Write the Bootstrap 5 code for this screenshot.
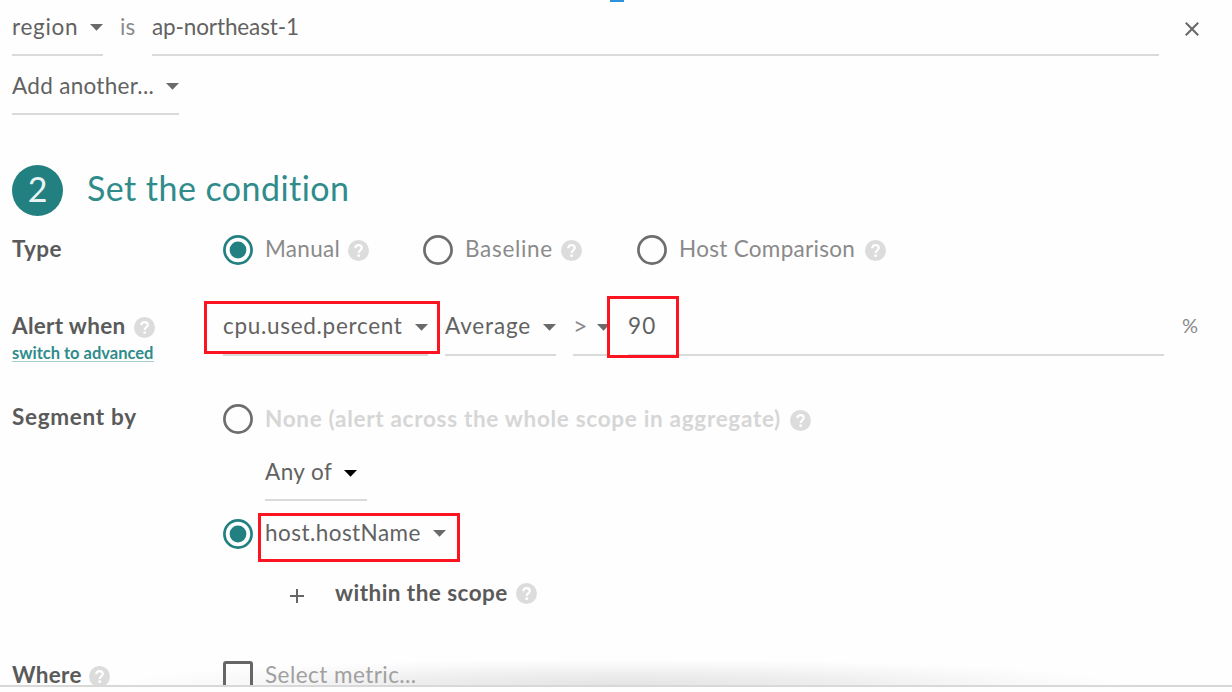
<!DOCTYPE html>
<html lang="en">
<head>
<meta charset="utf-8">
<title>Alert condition</title>
<link href="https://cdn.jsdelivr.net/npm/bootstrap@5.3.0/dist/css/bootstrap.min.css" rel="stylesheet">
<style>
  body { background: #fefefe; color: #626262; font: 400 22.5px/54px Lato, "Liberation Sans", sans-serif; overflow: hidden; }
  .panel { height: 687px; border-bottom: 2px solid #d8d8d8; overflow: hidden; padding-left: 12px; }
  .panel > * { z-index: 1; position: relative; }
  .panel > .tab-mark { position: absolute; z-index: 1; left: 610px; top: 0; width: 14px; height: 2px; background: #2f93dc; }
  .panel > .glow { position: absolute; z-index: 0; left: 100px; top: 660px; width: 1040px; height: 25px;
    background: radial-gradient(ellipse 510px 26px at 50% 100%, #e4e4e4 0, #ededed 40%, #f8f8f8 75%, #fefefe 100%); }
  .field { height: 56px; line-height: 54px; border-bottom: 2px solid #dadada; display: flex; justify-content: space-between; white-space: nowrap; flex: none; }
  .caret { width: 13px; height: 7px; fill: #6a6a6a; flex: none; margin-top: 24px; }
  .side { width: 211px; flex: none; font-weight: 700; color: #5a5a5a; white-space: nowrap; }
  .soft { color: #8a8a8a; }
  .teal { color: #2f8c8b; }
  .step { width: 51px; height: 51px; background: #238080; color: #e8f4f4; font-size: 34px; line-height: 47px; }
  .title { font-size: 34px; line-height: 46px; margin-left: 24px; letter-spacing: .45px; }
  .ring { width: 30px; height: 30px; flex: none; fill: none; stroke: #6e6e6e; stroke-width: 2.7; }
  .ring.on { stroke: #238080; }
  .help { width: 21px; height: 21px; flex: none; }
  .switch { font-size: 16.5px; line-height: 19px; font-weight: 700; width: 142px; height: 18px; border-bottom: 1px solid #a5cfce; }
  .frame { position: absolute; border: 3px solid #fc1420; }
  .box { width: 30px; height: 30px; border: 3px solid #666; border-radius: 3px; }
  .t0 { letter-spacing: -.12px } .t3 { letter-spacing: .3px } .t5 { letter-spacing: .45px }
  .t7 { letter-spacing: .7px } .t9 { letter-spacing: .85px } .t11 { letter-spacing: 1.1px }
</style>
</head>
<body>
<svg class="d-none">
  <symbol id="caret" viewBox="0 0 13 7"><path d="M0 0H13L6.5 6.8Z"/></symbol>
  <symbol id="off" viewBox="0 0 30 30"><circle cx="15" cy="15" r="13.6"/></symbol>
  <symbol id="on" viewBox="0 0 30 30"><circle cx="15" cy="15" r="13.6"/><circle cx="15" cy="15" r="8.4" fill="#238080" stroke="none"/></symbol>
  <symbol id="help" viewBox="0 0 21 21"><circle cx="10.5" cy="10.5" r="10.5" fill="#dcdcdc"/><path d="M7.3 8.2C7.3 6.2 8.7 5.1 10.5 5.1S13.8 6.2 13.8 7.9C13.8 10 10.7 10.3 10.7 12.9" fill="none" stroke="#fff" stroke-width="2.1"/><circle cx="10.7" cy="15.7" r="1.4" fill="#fff"/></symbol>
</svg>
<main class="panel position-relative">
  <div class="tab-mark"></div>
  <div class="glow"></div>

  <div class="d-flex" style="height:56px">
    <div class="field t7" style="width:91px">region<svg class="caret"><use href="#caret"/></svg></div>
    <span class="soft" style="margin-left:17px;width:32px">is</span>
    <div class="field t0" style="width:1007px">ap-northeast-1</div>
    <svg width="14" height="14" viewBox="0 0 14 14" style="margin:22px 0 0 25.5px"><path d="M.8.8 13.2 13.2M13.2.8.8 13.2" stroke="#666" stroke-width="2"/></svg>
  </div>
  <div class="field t3" style="width:167px;margin-top:3px">Add another...<svg class="caret"><use href="#caret"/></svg></div>

  <div class="d-flex" style="margin-top:50px">
    <div class="step rounded-circle text-center">2</div>
    <h2 class="title teal fw-normal mb-0">Set the condition</h2>
  </div>

  <div class="d-flex align-items-center" style="height:67px">
    <div class="side t5" style="margin-top:-2px">Type</div>
    <svg class="ring on"><use href="#on"/></svg><span class="soft t3" style="margin:-1px 0 0 12px;width:83px">Manual</span><svg class="help" style="margin-top:1px"><use href="#help"/></svg>
    <svg class="ring" style="margin-left:54px"><use href="#off"/></svg><span class="soft t7" style="margin:-1px 0 0 12px;width:96px">Baseline</span><svg class="help" style="margin-top:1px"><use href="#help"/></svg>
    <svg class="ring" style="margin-left:55px"><use href="#off"/></svg><span class="soft t3" style="margin:-1px 0 0 12px;width:186px">Host Comparison</span><svg class="help" style="margin-top:1px"><use href="#help"/></svg>
  </div>

  <div class="d-flex" style="padding-top:17px;height:73px">
    <div class="side">
      <div class="d-flex" style="height:44px;line-height:51px"><span class="t3" style="width:121.5px">Alert when</span><svg class="help" style="margin-top:17px"><use href="#help"/></svg></div>
      <div class="switch teal">switch to advanced</div>
    </div>
    <div class="field t7" style="width:205px;line-height:51px">cpu.used.percent<svg class="caret"><use href="#caret"/></svg></div>
    <div class="field t9" style="width:111px;margin-left:17px;line-height:51px">Average<svg class="caret"><use href="#caret"/></svg></div>
    <div class="field soft" style="width:37px;margin-left:17px;font-size:25px;line-height:50px">&gt;<svg class="caret"><use href="#caret"/></svg></div>
    <div class="field t11" style="width:536px;margin-left:18px;line-height:51px">90</div>
    <span class="soft" style="margin-left:18px;font-size:20px;line-height:51px">%</span>
  </div>

  <div class="d-flex" style="margin-top:48px;height:30px">
    <div class="side t7" style="line-height:25px">Segment by</div>
    <svg class="ring"><use href="#off"/></svg>
    <span class="t7" style="margin-left:12px;width:525px;line-height:29px;color:#d6d6d6;font-weight:700;white-space:nowrap">None (alert across the whole scope in aggregate)</span>
    <svg class="help" style="margin-top:6px"><use href="#help"/></svg>
  </div>
  <div class="field t5" style="width:102px;margin:11px 0 0 253px;padding-right:10px">Any of<svg class="caret" style="fill:#000;margin-top:25px"><use href="#caret"/></svg></div>
  <div class="d-flex" style="margin-top:5px;height:56px;padding-left:211px">
    <svg class="ring" style="margin-top:12.5px;stroke:#238080"><use href="#on"/></svg>
    <div class="d-flex justify-content-between t5" style="margin-left:12px;width:181px">host.hostName<svg class="caret"><use href="#caret"/></svg></div>
  </div>
  <div class="d-flex side t5" style="height:60px;line-height:62px;padding-left:278px">
    <svg width="14" height="14" viewBox="0 0 14 14" class="flex-shrink-0" style="margin-top:27px"><path d="M7 0V14M0 7H14" stroke="#666" stroke-width="2"/></svg>
    <span style="margin-left:31px;width:181px;flex:none">within the scope</span>
    <svg class="help" style="margin-top:21px"><use href="#help"/></svg>
  </div>
  <div class="d-flex" style="margin-top:26px;height:37px">
    <div class="side d-flex t3" style="line-height:53px"><span style="width:77px">Where</span><svg class="help" style="margin-top:18px"><use href="#help"/></svg></div>
    <div class="box" style="margin-top:13px"></div>
    <span class="t5" style="margin-left:12px;color:#a0a0a0;line-height:53px">Select metric...</span>
  </div>

  <div class="frame" style="left:204px;top:301px;width:236px;height:53px"></div>
  <div class="frame" style="left:607px;top:296px;width:72px;height:62px"></div>
  <div class="frame" style="left:258px;top:513px;width:202px;height:49px"></div>
</main>
<script src="https://cdn.jsdelivr.net/npm/bootstrap@5.3.0/dist/js/bootstrap.bundle.min.js"></script>
</body>
</html>
